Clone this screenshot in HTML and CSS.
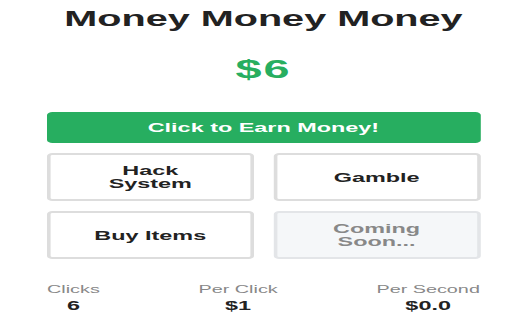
FILE: index.html
```html
<!DOCTYPE html>
<html lang="en">
<head>
<meta charset="utf-8">
<title>Money Money Money</title>
<link rel="stylesheet" href="styles.css">
</head>
<body>
<main class="app">
  <h1 class="title">Money Money Money</h1>
  <div class="balance">$6</div>
  <button class="earn">Click to Earn Money!</button>
  <div class="actions">
    <button class="action">Hack System</button>
    <button class="action">Gamble</button>
    <button class="action">Buy Items</button>
    <button class="action disabled">Coming Soon...</button>
  </div>
  <div class="stats">
    <div class="stat">
      <div class="stat-label">Clicks</div>
      <div class="stat-value">6</div>
    </div>
    <div class="stat">
      <div class="stat-label">Per Click</div>
      <div class="stat-value">$1</div>
    </div>
    <div class="stat">
      <div class="stat-label">Per Second</div>
      <div class="stat-value">$0.0</div>
    </div>
  </div>
</main>
</body>
</html>
```
FILE: styles.css
```css
html, body {
  margin: 0;
  padding: 0;
  background: #ffffff;
  overflow: hidden;
}

body {
  font-family: "Liberation Sans", Arial, sans-serif;
  color: #222222;
}

.app {
  width: 240.5px;
  margin-left: 47px;
  padding-top: 6px;
  transform: scaleX(1.8);
  transform-origin: 0 0;
}

.title {
  margin: 0;
  font-size: 22px;
  line-height: 26px;
  font-weight: bold;
  text-align: center;
  color: #222222;
}

.balance {
  margin-top: 22px;
  font-size: 26px;
  line-height: 30px;
  font-weight: bold;
  letter-spacing: 1px;
  text-align: center;
  color: #27ae60;
}

.earn {
  display: block;
  width: 100%;
  height: 31px;
  margin-top: 28px;
  padding: 0;
  border: 0;
  border-radius: 3px;
  background: #27ae60;
  color: #ffffff;
  font-family: inherit;
  font-size: 13px;
  line-height: 13px;
  font-weight: bold;
}

.actions {
  display: grid;
  grid-template-columns: 1fr 1fr;
  grid-auto-rows: 48px;
  column-gap: 11px;
  row-gap: 10px;
  margin-top: 10px;
}

.action {
  display: flex;
  align-items: center;
  justify-content: center;
  padding: 0 20px;
  border: 2px solid #dddddd;
  border-radius: 3px;
  background: #ffffff;
  color: #222222;
  font-family: inherit;
  font-size: 13px;
  line-height: 13px;
  font-weight: bold;
  text-align: center;
}

.action.disabled {
  background: #f5f7f9;
  border-color: #e3e5e8;
  color: #888888;
}

.stats {
  display: flex;
  justify-content: space-between;
  margin-top: 23px;
}

.stat {
  text-align: center;
}

.stat-label {
  font-size: 11px;
  line-height: 14px;
  color: #888888;
}

.stat-value {
  margin-top: 2px;
  font-size: 13px;
  line-height: 16px;
  font-weight: bold;
  color: #222222;
}
```
